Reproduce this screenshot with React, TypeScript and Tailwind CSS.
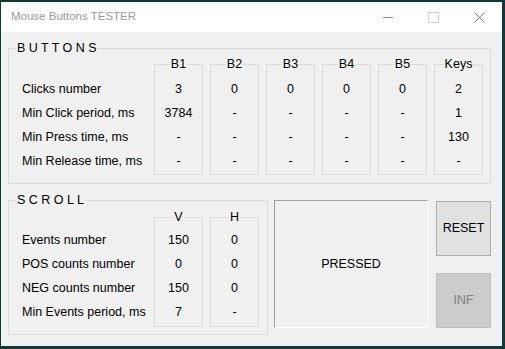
import React from 'react';

const font = { fontFamily: '"Liberation Sans", Arial, sans-serif' };

const GroupHeader: React.FC<{ title: string; center?: boolean }> = ({ title, center }) => (
    <div className="flex h-4">
        <div className={`mt-2 border-l border-t border-[#dcdcdc] ${center ? 'flex-1' : 'w-[8px]'}`} />
        <span className="px-[1px] leading-4 whitespace-pre">{title}</span>
        <div className="mt-2 flex-1 border-r border-t border-[#dcdcdc]" />
    </div>
);

const Column: React.FC<{ title: string; values: string[]; pt: string; pb: string }> = ({ title, values, pt, pb }) => (
    <div className="flex w-[49px] flex-col">
        <GroupHeader title={title} center />
        <div className={`border-x border-b border-[#dcdcdc] ${pt} ${pb}`}>
            {values.map((v, i) => (
                <div key={i} className="flex h-6 items-center justify-center">{v}</div>
            ))}
        </div>
    </div>
);

const buttonCols = [
    { title: 'B1', values: ['3', '3784', '-', '-'] },
    { title: 'B2', values: ['0', '-', '-', '-'] },
    { title: 'B3', values: ['0', '-', '-', '-'] },
    { title: 'B4', values: ['0', '-', '-', '-'] },
    { title: 'B5', values: ['0', '-', '-', '-'] },
    { title: 'Keys', values: ['2', '1', '130', '-'] },
];

const buttonLabels = ['Clicks number', 'Min Click period, ms', 'Min Press time, ms', 'Min Release time, ms'];
const scrollLabels = ['Events number', 'POS counts number', 'NEG counts number', 'Min Events period, ms'];

export default function App() {
    return (
        <div className="h-[349px] w-[505px] overflow-hidden bg-[#0f3a38] pl-[1px] pt-[2px]" style={font}>
            <div className="h-[344px] w-[501px] bg-[#f0f0f0] text-[12.5px] text-black">
                {/* Title bar */}
                <div className="flex h-[30px] items-center bg-white pl-[10px]">
                    <span className="flex-1 text-[11.5px] text-[#999999]">Mouse Buttons TESTER</span>
                    <svg width="11" height="11" viewBox="0 0 11 11" className="mr-[34px]">
                        <line x1="0" y1="5.5" x2="10" y2="5.5" stroke="#8a8a8a" strokeWidth="1" />
                    </svg>
                    <svg width="11" height="11" viewBox="0 0 11 11" className="mr-[35px]">
                        <rect x="0.5" y="0.5" width="10" height="10" fill="none" stroke="#d0d0d0" strokeWidth="1" />
                    </svg>
                    <svg width="11" height="11" viewBox="0 0 11 11" className="mr-[17px]">
                        <path d="M0.5 0.5 L10.5 10.5 M10.5 0.5 L0.5 10.5" stroke="#777" strokeWidth="1" />
                    </svg>
                </div>

                <div className="pl-[7px] pt-2">
                    {/* BUTTONS group */}
                    <div className="flex w-[483px] flex-col">
                        <GroupHeader title="B U T T O N S" />
                        <div className="flex border-x border-b border-[#dcdcdc] pb-[8px]">
                            <div className="w-[145px] pl-[13px] pt-[21px]">
                                {buttonLabels.map((l) => (
                                    <div key={l} className="flex h-6 items-center">{l}</div>
                                ))}
                            </div>
                            <div className="flex gap-[7px]">
                                {buttonCols.map((c) => (
                                    <Column key={c.title} title={c.title} values={c.values} pt="pt-[5px]" pb="pb-[1px]" />
                                ))}
                            </div>
                        </div>
                    </div>

                    <div className="mt-2 flex">
                        {/* SCROLL group */}
                        <div className="flex w-[260px] flex-col">
                            <GroupHeader title="S C R O L L" />
                            <div className="flex border-x border-b border-[#dcdcdc] pb-[7px] pt-[1px]">
                                <div className="w-[145px] pl-[13px] pt-[19px]">
                                    {scrollLabels.map((l) => (
                                        <div key={l} className="flex h-6 items-center">{l}</div>
                                    ))}
                                </div>
                                <div className="flex gap-[7px]">
                                    <Column title="V" values={['150', '0', '150', '7']} pt="pt-[3px]" pb="pb-[2px]" />
                                    <Column title="H" values={['0', '0', '0', '-']} pt="pt-[3px]" pb="pb-[2px]" />
                                </div>
                            </div>
                        </div>

                        {/* Pressed indicator */}
                        <div className="ml-[6px] mt-2 flex h-[128px] w-[154px] items-center justify-center border border-b-white border-l-[#a0a0a0] border-r-white border-t-[#a0a0a0] bg-[#f0f0f0]">
                            PRESSED
                        </div>

                        {/* Action buttons */}
                        <div className="ml-[8px] mt-[9px] flex flex-col gap-[17px]">
                            <button className="flex h-[55px] w-[55px] items-center justify-center border border-[#adadad] bg-[#e1e1e1] text-black">
                                RESET
                            </button>
                            <button className="flex h-[55px] w-[55px] items-center justify-center border border-[#bfbfbf] bg-[#cccccc] text-[#838383]">
                                INF
                            </button>
                        </div>
                    </div>
                </div>
            </div>
        </div>
    );
}
